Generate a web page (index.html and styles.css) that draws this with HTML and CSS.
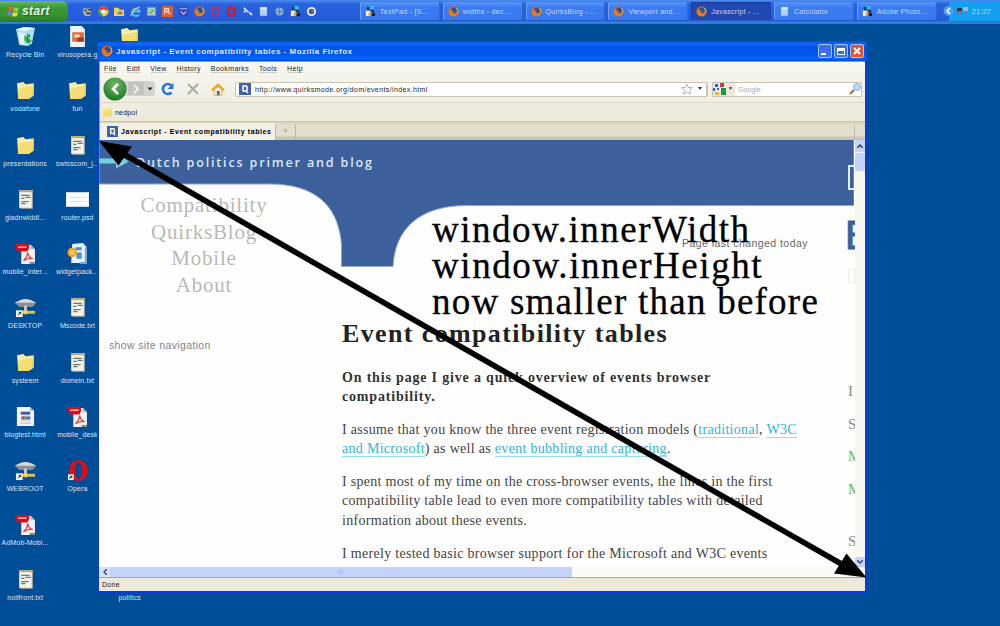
FILE: index.html
```html
<!DOCTYPE html>
<html lang="en">
<head>
<meta charset="utf-8">
<title>Desktop</title>
<link rel="stylesheet" href="styles.css">
</head>
<body>
<svg class="defs" width="0" height="0">
  <defs>
    <linearGradient id="gFolder" x1="0" y1="0" x2="1" y2="1"><stop offset="0" stop-color="#fff6b0"/><stop offset="1" stop-color="#eec54a"/></linearGradient>
    <radialGradient id="gBack" cx=".5" cy=".3" r=".7"><stop offset="0" stop-color="#72b866"/><stop offset="1" stop-color="#1c7a22"/></radialGradient>
  </defs>
  <symbol id="folder" viewBox="0 0 20 20"><path d="M2 3l6-1 2 2 8-1 0 12-5 3-10 0z" fill="url(#gFolder)"/><path d="M4 7l13-2-1 11-3 2-10 0z" fill="#f6dc74"/><path d="M4 7l12-2" stroke="#fffbd5" stroke-width="1"/></symbol>
  <symbol id="bin" viewBox="0 0 20 20"><path d="M1 3l8-2 10 1-3 15-4 2-8-1z" fill="#b4dcf0"/><path d="M1 3l8 2 10-3-10-1z" fill="#eafaff"/><path d="M3 6l2 11 4 1V7z" fill="#e0f4fc"/><path d="M12 7l3 2-2 3 3 2-3 3-3-2M9 9l3 2-3 4z" fill="#2aa43c"/></symbol>
  <symbol id="txt" viewBox="0 0 20 20"><path d="M4 1h13v17H4z" fill="#f4f3ec"/><path d="M4 1h13v2H4z" fill="#b9aa78"/><path d="M6 6h8M6 9h3M10 8h5M6 12h7M6 14h4" stroke="#6d7780" stroke-width="1.2"/><path d="M16.500 2v16.500H5" fill="none" stroke="#8b9299"/></symbol>
  <symbol id="pres" viewBox="0 0 20 20"><path d="M3 0h11l3 3v17H3z" fill="#edf2fb"/><path d="M5 6h11v9H5z" fill="#dd6b32"/><path d="M7 8h5v3H7z" fill="#fbe0c0"/><path d="M10 11h6v4h-6z" fill="#a63820"/></symbol>
  <symbol id="card" viewBox="0 0 24 20"><path d="M1 3h22v14H1z" fill="#fbfcfd"/><path d="M4 8h16M4 12h16" stroke="#dfe3e8"/></symbol>
  <symbol id="pdf" viewBox="0 0 20 20"><path d="M6 2h9l4 4v14H6z" fill="#f4f2f3"/><path d="M15 2v4h4z" fill="#bbb"/><path d="M0 1h12l2 2-2 5H2z" fill="#d5101c"/><path d="M3 4h8" stroke="#f6aaaa" stroke-width="1.500"/><path d="M8 17c3-3 4-5 4-8 1 4 2 5 5 6-3-1-6 0-9 2z" fill="none" stroke="#e04048" stroke-width="1.200"/><path d="M14 18h5v2h-5z" fill="#888"/></symbol>
  <symbol id="zip" viewBox="0 0 20 20"><path d="M5 1l10-1 4 4v15H4z" fill="#e8f2fb"/><path d="M8 4h6v3H8zM9 9h5v6H9z" fill="#4c8fd0"/><circle cx="5" cy="9" r="4.500" fill="#f0a423"/><path d="M3 7h4v4H3z" fill="#f9d163"/><path d="M18 4v15h-6" fill="none" stroke="#73a8d8" stroke-width="2"/></symbol>
  <symbol id="drive" viewBox="0 0 22 22"><path d="M0 6q11-8 22 0l-4 4H5z" fill="#d8d9d7"/><path d="M0 6h22l-3 4H4z" fill="#8b8e90"/><path d="M11 9v7" stroke="#ccc" stroke-width="3"/><path d="M3 16h18" stroke="#d9c264" stroke-width="3"/><path d="M9 14h4v4H9z" fill="#f8da33"/><path d="M1 14h7v7H1z" fill="#f6f6f6"/><path d="M3 19l3-3M4 16h2v2" fill="none" stroke="#222"/></symbol>
  <symbol id="html" viewBox="0 0 20 22"><path d="M1 1h14l4 4v16H1z" fill="#f3f4f7"/><path d="M15 1v4h4" fill="#9fa9b8"/><path d="M5 6h10v3H5z" fill="#4655a6"/><path d="M5 10h10v6H5z" fill="#cfd6ea"/><path d="M6 11h3v3H6z" fill="#d13a2e"/><path d="M9 11h3v3H9z" fill="#35a048"/><path d="M12 11h3v3h-3z" fill="#3f68e0"/><path d="M4 18h12" stroke="#b4bac6"/></symbol>
  <symbol id="opera" viewBox="0 0 22 22"><ellipse cx="12" cy="11" rx="10" ry="11" fill="#d8101c"/><ellipse cx="12" cy="11" rx="3.600" ry="8.500" fill="#004e98"/><path d="M1 15h6v6H1z" fill="#f6f6f6"/><path d="M2 20l3-3M3 17h2v2" fill="none" stroke="#222"/></symbol>
  <symbol id="ring" viewBox="0 0 12 12"><ellipse cx="6" cy="6" rx="3.800" ry="4.600" fill="none" stroke="currentColor" stroke-width="2.600"/></symbol>
  <symbol id="fox" viewBox="0 0 12 12"><circle cx="6" cy="6" r="5.500" fill="#e8660c"/><circle cx="6.800" cy="4.600" r="3.200" fill="#35508e"/><path d="M1 2q0 3 3 3l2 1-1 2 4 0 2-5q1 8-5 8.500Q0 11 1 2z" fill="#f07a12"/><path d="M8 1q4 2 3 7-1-4-3-7z" fill="#fbbb2c"/></symbol>
  <symbol id="chrome" viewBox="0 0 12 12"><circle cx="6" cy="6" r="5.500" fill="#f5c92b"/><path d="M1 4a5.500 5.500 0 0 1 10 0L6 6z" fill="#e03a2c"/><path d="M1 4l3 4 2 3.500A5.500 5.500 0 0 1 1 4z" fill="#37a446"/><circle cx="6" cy="6" r="2.500" fill="#e8f2ff"/></symbol>
  <symbol id="ie" viewBox="0 0 12 12"><path d="M10 9a4 4 0 1 1 .5-3H4" fill="none" stroke="#55c4f4" stroke-width="2"/><path d="M1 11Q2 3 11 1" fill="none" stroke="#f2c641" stroke-width="1.200"/></symbol>
  <symbol id="globe" viewBox="0 0 12 12"><circle cx="6" cy="6" r="4.500" fill="#86aed4"/><path d="M2 6h8M6 2v8" stroke="#4f7eae"/></symbol>
  <symbol id="pad" viewBox="0 0 12 12"><path d="M2 1h8v8H2z" fill="#163a80"/><path d="M5 0h5v4H5z" fill="#30b7e8"/><path d="M1 5h5v6H1z" fill="#f3efe4"/><path d="M4 7h4v4H4z" fill="#e9a23c"/><path d="M7 8h4v3H7z" fill="#182038"/></symbol>
  <symbol id="scissors" viewBox="0 0 12 12"><path d="M2 2l5 5M8 7l3 3M4 5l-2 2" stroke="#d8d8e8" stroke-width="2"/></symbol>
  <symbol id="dog" viewBox="0 0 12 12"><path d="M2 2l3 1 4-1 1 3-1 6H3L1 7z" fill="#a8b0a4"/><path d="M3 4h2v2H3zM7 3h3v2H7zM5 7h4v2H5z" fill="#2d3440"/></symbol>
  <symbol id="book" viewBox="0 0 12 12"><path d="M2 1h8v10H2z" fill="#9fbdf0"/><path d="M3 2h6v2H3zM3 6h6M3 8h6" fill="#dbe7fa" stroke="#dbe7fa"/></symbol>
  <symbol id="magn" viewBox="0 0 12 12"><circle cx="6" cy="6" r="4" fill="#315a94" stroke="#e8eef8" stroke-width="2"/><path d="M5 5h3v3z" fill="#e06040"/></symbol>
  <symbol id="qm" viewBox="0 0 12 12"><path d="M0 0h12v12H0z" fill="#3d64a8"/><path d="M8 3H4v5h3l2 2M8 3v5" fill="none" stroke="#fff" stroke-width="1.500"/></symbol>
</svg>

<div class="desktop">
  <header class="taskbar">
    <div class="start">
      <svg width="13" height="13" viewBox="0 0 13 13"><path d="M2 2q2-1.500 4 0L5 6Q3 5 1 6z" fill="#ee5a2c"/><path d="M7 2q2 1.500 5 0l-1 4Q9 7 6 6z" fill="#8ad044"/><path d="M1 7q2-1 4 0l-1 4Q2 10 0 11z" fill="#5a8cf0"/><path d="M6 7q2 1.500 5 0l-1 4q-2 1-5 0z" fill="#fbd435"/></svg>
      <span>start</span>
    </div>
    <nav class="quick">
      <svg><use href="#dog"/></svg><svg><use href="#chrome"/></svg>
      <svg viewBox="0 0 12 12"><path d="M0 2h5l1 2h5v7H0z" fill="#f1cf58"/><path d="M4 6h5v3H4z" fill="#7c8390"/></svg>
      <svg><use href="#ie"/></svg>
      <svg viewBox="0 0 12 12"><path d="M1 1h10v10H1z" fill="#67a883"/><path d="M3 3h6v6H3zM3 3l6 6" stroke="#d4ecd9" fill="none"/></svg>
      <svg viewBox="0 0 12 12"><path d="M0 0h12v12H0z" fill="#d8603e"/><path d="M3 9V3h4v3H3M6 6l3 3" stroke="#f9d0bc" fill="none" stroke-width="1.500"/></svg>
      <svg viewBox="0 0 12 12"><path d="M1 1h10v10H1z" fill="#3b42b4"/><path d="M2 3h8M3 6l3 3 3-3" stroke="#b9bdf2" fill="none" stroke-width="1.300"/></svg>
      <svg><use href="#fox"/></svg><svg class="dim"><use href="#ring"/></svg><svg class="red"><use href="#ring"/></svg>
      <svg><use href="#scissors"/></svg><svg><use href="#book"/></svg><svg><use href="#globe"/></svg><svg><use href="#pad"/></svg><svg><use href="#magn"/></svg>
    </nav>
    <div class="tasks">
      <div class="task"><svg><use href="#pad"/></svg><span>TextPad - [S...</span></div>
      <div class="task"><svg><use href="#fox"/></svg><span>widths - dec...</span></div>
      <div class="task"><svg><use href="#fox"/></svg><span>QuirksBlog - ...</span></div>
      <div class="task"><svg><use href="#fox"/></svg><span>Viewport and...</span></div>
      <div class="task active"><svg><use href="#fox"/></svg><span>Javascript - ...</span></div>
      <div class="task"><svg><use href="#book"/></svg><span>Calculator</span></div>
      <div class="task"><svg><use href="#pad"/></svg><span>Adobe Photo...</span></div>
    </div>
    <div class="tray">
      <svg class="chev" width="11" height="12" viewBox="0 0 11 12"><circle cx="5.500" cy="6" r="5" fill="#4e9df6"/><path d="M7 3L4 6l3 3" fill="none" stroke="#fff" stroke-width="1.600"/></svg>
      <svg width="13" height="12" viewBox="0 0 13 12"><path d="M1 3h5v4H1z" fill="#303058"/><path d="M2 6h4v3H2z" fill="#b8625c"/><path d="M7 2h5v4H7z" fill="#9cb8d0"/></svg>
      <span>21:27</span>
    </div>
  </header>

  <main class="icons">
    <div class="ic"><svg><use href="#bin"/></svg><span>Recycle Bin</span></div>
    <div class="ic"><svg><use href="#pres"/></svg><span>virusopera.g</span></div>
    <div class="ic"><svg><use href="#folder"/></svg></div>
    <div class="ic"><svg><use href="#folder"/></svg><span>vodafone</span></div>
    <div class="ic"><svg><use href="#folder"/></svg><span>fun</span></div>
    <div></div>
    <div class="ic"><svg><use href="#folder"/></svg><span>presentations</span></div>
    <div class="ic"><svg><use href="#txt"/></svg><span>swisscom_j...</span></div>
    <div></div>
    <div class="ic"><svg><use href="#txt"/></svg><span>gladnwiddl...</span></div>
    <div class="ic wide"><svg><use href="#card"/></svg><span>router.psd</span></div>
    <div></div>
    <div class="ic"><svg><use href="#pdf"/></svg><span>mobile_inter...</span></div>
    <div class="ic"><svg><use href="#zip"/></svg><span>widgetpack...</span></div>
    <div></div>
    <div class="ic"><svg><use href="#drive"/></svg><span>DESKTOP</span></div>
    <div class="ic"><svg><use href="#txt"/></svg><span>Mscode.txt</span></div>
    <div></div>
    <div class="ic"><svg><use href="#folder"/></svg><span>systeem</span></div>
    <div class="ic"><svg><use href="#txt"/></svg><span>domein.txt</span></div>
    <div></div>
    <div class="ic"><svg><use href="#html"/></svg><span>blogtest.html</span></div>
    <div class="ic"><svg><use href="#pdf"/></svg><span>mobile_desk</span></div>
    <div></div>
    <div class="ic"><svg><use href="#drive"/></svg><span>WEBROOT</span></div>
    <div class="ic"><svg><use href="#opera"/></svg><span>Opera</span></div>
    <div></div>
    <div class="ic"><svg><use href="#pdf"/></svg><span>AdMob-Mobi...</span></div>
    <div></div><div></div>
    <div class="ic"><svg><use href="#txt"/></svg><span>nolifront.txt</span></div>
    <div></div>
    <div class="ic"><svg></svg><span>politics</span></div>
  </main>

  <section class="window">
    <div class="titlebar">
      <svg width="12" height="12"><use href="#fox"/></svg>
      <h1>Javascript - Event compatibility tables - Mozilla Firefox</h1>
      <div class="btn"><i class="min"></i></div>
      <div class="btn"><i class="max"></i></div>
      <div class="btn close"><svg width="10" height="10" viewBox="0 0 10 10"><path d="M2 2l6 6M8 2L2 8" stroke="#fff" stroke-width="2"/></svg></div>
    </div>
    <div class="chrome">
      <div class="menu"><span>File</span><span>Edit</span><span>View</span><span>History</span><span>Bookmarks</span><span>Tools</span><span>Help</span></div>
      <div class="toolbar">
        <svg class="nav" width="52" height="24" viewBox="0 0 52 24"><path d="M20 4h28q4 0 4 4v7q0 4-4 4H20z" fill="#d2d2ce"/><path d="M25 5h16v13H25z" fill="#c3c4c2"/><path d="M31 8l4 4-4 4" fill="none" stroke="#eee" stroke-width="2"/><path d="M44.500 10.500h5l-2.500 3z" fill="#222"/><circle cx="12" cy="12" r="11.500" fill="url(#gBack)"/><path d="M15 7l-5 5 5 5" fill="none" stroke="#fff" stroke-width="2.600"/></svg>
        <svg class="reload" width="14" height="14" viewBox="0 0 14 14"><path d="M10.500 10.500a5 5 0 1 1 0-7" fill="none" stroke="#2a74dc" stroke-width="2.600"/><path d="M12.500 1v6h-6z" fill="#2a74dc"/></svg>
        <svg class="stop" width="12" height="12" viewBox="0 0 12 12"><path d="M1 1l10 10M11 1L1 11" stroke="#a9a9a4" stroke-width="2"/></svg>
        <svg class="home" width="14" height="13" viewBox="0 0 14 13"><path d="M3 7h8v5H3z" fill="#dfe6f0"/><path d="M1 7.500L7 2l6 5.500" fill="none" stroke="#eba91e" stroke-width="2.600"/><path d="M3 7v5.500h3M11 7v5.500H8.500" fill="none" stroke="#e9c060"/><path d="M6 8h2.500v4.500H6z" fill="#8a5530"/></svg>
        <div class="url"><svg width="12" height="12"><use href="#qm"/></svg><span>http://www.quirksmode.org/dom/events/index.html</span>
          <svg width="12" height="12" viewBox="0 0 12 12"><path d="M6 1l1.500 3.500 4 .2-3 2.600 1 3.700L6 9l-3.500 2 1-3.700-3-2.600 4-.2z" fill="#fff" stroke="#b4b4b4"/></svg>
          <svg width="6" height="4" viewBox="0 0 6 4"><path d="M1 0h4L3 3z" fill="#333"/></svg></div>
        <div class="search"><div class="engine"><svg width="13" height="12" viewBox="0 0 13 12"><path d="M0 0h13v12H0z" fill="#e8eefc"/><path d="M7 0h4v4H7z" fill="#e8302c"/><path d="M8 5h5v7H8z" fill="#159b3c"/><path d="M2 1h3v3H2zM0 5h2v3H0zM4 5h2v2H4z" fill="#2c5ee0"/><path d="M2 9h4v3H2z" fill="#f7b41e"/></svg><svg width="5" height="4" viewBox="0 0 6 4"><path d="M1 0h4L3 3z" fill="#333"/></svg></div><span>Google</span>
          <svg width="12" height="12" viewBox="0 0 12 12"><path d="M1 11l4-4" stroke="#a46a3c" stroke-width="2.200"/><circle cx="8" cy="4" r="3.400" fill="#b9ddfa" stroke="#79aee6"/></svg></div>
      </div>
      <div class="bookmarks"><svg width="12" height="12"><use href="#folder"/></svg><span>nedpol</span></div>
      <div class="tabs">
        <div class="tab"><svg width="11" height="11"><use href="#qm"/></svg><span>Javascript - Event compatibility tables</span></div>
        <div class="newtab">+</div>
        <div class="alltabs"></div>
      </div>
    </div>
    <div class="view">
      <div class="page">
        <svg class="banner" width="755" height="130" viewBox="0 0 755 130"><path d="M0 0H755V66.500H368C320 66.500 296 90 294 127.500H242.500V105C239 65 215 45 170 45H0z" fill="#3c609c" stroke="#8fa6cf"/><path d="M0 19.500h17v-5l13 8-13 7v-5H0z" fill="#74cfe6"/><path d="M755 27h-5v23h5" fill="none" stroke="#e4ecf8" stroke-width="2"/></svg>
        <p class="tagline">Dutch politics primer and blog</p>
        <div class="cols">
          <div class="side">
            <a>Compatibility</a><a>QuirksBlog</a><a>Mobile</a><a>About</a>
            <p>show site navigation</p>
          </div>
          <article>
            <p class="changed">Page last changed today</p>
            <h2>Event compatibility tables</h2>
            <p class="lead">On this page I give a quick overview of events browser<br>compatibility.</p>
            <p>I assume that you know the three event registration models (<a>traditional</a>, <a>W3C</a><br><a>and Microsoft</a>) as well as <a>event bubbling and capturing</a>.</p>
            <p>I spent most of my time on the cross-browser events, the lines in the first<br>compatibility table lead to even more compatibility tables with detailed<br>information about these events.</p>
            <p>I merely tested basic browser support for the Microsoft and W3C events</p>
          </article>
          <aside><b>E</b><i></i><span>I</span><span>S</span><span class="g">M</span><span class="g u">M</span><span>S</span></aside>
        </div>
      </div>
      <div class="vbar"><div class="up"><svg width="6" height="4" viewBox="0 0 6 4"><path d="M0 4l3-3 3 3" fill="none" stroke="#3a5080" stroke-width="1.500"/></svg></div><div class="vthumb"></div><div class="down"><svg width="6" height="4" viewBox="0 0 6 4"><path d="M0 0l3 3 3-3" fill="none" stroke="#3a5080" stroke-width="1.500"/></svg></div></div>
    </div>
    <div class="hbar"><div class="left"><svg width="4" height="6" viewBox="0 0 4 6"><path d="M4 0L1 3l3 3" fill="none" stroke="#3a5080" stroke-width="1.500"/></svg></div><div class="hthumb"><svg width="6" height="5" viewBox="0 0 6 5"><path d="M1 0v5M4 0v5" stroke="#9cb4ee"/></svg></div></div>
    <div class="status">Done</div>
  </section>

  <div class="note"><span class="n1">window.innerWidth</span><span class="n2">window.innerHeight</span><span class="n3">now smaller than before</span></div>
  <svg class="arrow" width="1000" height="626" viewBox="0 0 1000 626"><path d="M120 152L845 566" stroke="#000" stroke-width="5.600"/><path d="M99 141l33 5.500-13.500 19zM866.500 577.500l-20-24-12.500 20z"/></svg>
</div>
</body>
</html>
```
FILE: styles.css
```css
* { box-sizing: border-box; }
body { margin: 0; font-family: "Liberation Sans", Arial, sans-serif; }
h1, h2, p { margin: 0; }
svg { display: block; flex: none; }
.defs { position: absolute; }
.desktop { position: relative; width: 1000px; height: 626px; overflow: hidden; background: #004e98; }

.taskbar { display: flex; align-items: center; height: 24px; background: linear-gradient(#4a8ef0 0, #2a62dc 4px, #245bdb 17px, #245bd0 21px, #3a84e0 22px, #2a76d2 24px); }
.start { display: flex; align-items: center; gap: 2px; width: 68px; height: 21px; margin-bottom: 2px; padding-left: 7px; border-radius: 0 6px 6px 0; background: linear-gradient(#6cba62, #3a9a38 30%, #349030 75%, #2a7828); color: #e9f6e6; font: italic bold 12px "Liberation Sans", sans-serif; letter-spacing: .4px; text-shadow: 1px 1px 1px #255d22; }
.quick { display: flex; gap: 5px; padding-left: 14px; margin-bottom: 2px; width: 292px; }
.quick svg { width: 11px; height: 11px; }
.dim { color: #a03a78; }
.red { color: #e01020; }
.tasks { display: flex; gap: 3px; width: 580px; height: 18px; margin-bottom: 2px; }
.task { display: flex; align-items: center; gap: 4px; flex: none; width: 79.800px; padding-left: 5px; border-radius: 2px; background: linear-gradient(#5a96f8, #3c7cf2 30%, #3878ee); color: #c6d8fb; font-size: 7px; letter-spacing: .3px; white-space: nowrap; box-shadow: inset 1px 0 #6aa2fa, inset -1px 0 #2e66d8; }
.task svg { width: 11px; height: 11px; }
.active { background: #1d49b0; box-shadow: inset 1px 1px #173c98; }
.tray { display: flex; align-items: center; gap: 2px; width: 60px; height: 20px; margin-bottom: 2px; padding-left: 3px; background: linear-gradient(90deg, transparent 9px, #14a0ee 9px); color: #b8e4fc; font-size: 7px; letter-spacing: .3px; }
.tray span { padding-left: 1px; }

.icons { display: grid; grid-template-columns: repeat(3, 52.300px); grid-auto-rows: 54.250px; margin-left: -1px; padding-top: 2px; }
.ic { display: flex; flex-direction: column; align-items: center; gap: 4px; color: #d8e6f6; font-size: 7px; line-height: 8px; letter-spacing: .12px; white-space: nowrap; }
.ic svg { width: 21px; height: 21px; }
.wide svg { width: 25px; }

.window { position: absolute; left: 97px; top: 41px; width: 770px; height: 552px; display: flex; flex-direction: column; padding: 0 2px 3px; border-radius: 5px 5px 0 0; background: #0a3bd8; overflow: hidden; }
.titlebar { display: flex; align-items: center; gap: 3px; height: 20px; flex: none; margin: 0 -2px; padding: 0 3px 0 4px; background: linear-gradient(#0a4ad0, #1068fa 3px, #0054e4 6px, #0058ee 14px, #0068fe 18px, #0040c8); }
.titlebar h1 { flex: 1; color: #dbe8ff; font-size: 8px; font-weight: bold; letter-spacing: .5px; white-space: nowrap; }
.btn { width: 14px; height: 14px; margin-left: -1px; border: 1px solid #a9c4fa; border-radius: 2px; background: #3b6df0; }
.btn i { display: block; }
.min { width: 5px; height: 2px; margin: 8px 0 0 2px; background: #fff; }
.max { width: 8px; height: 7px; margin: 3px 0 0 2px; border: 1px solid #fff; border-top-width: 3px; }
.close { background: #e2532c; padding: 1px; }
.chrome { flex: none; height: 79px; border: solid #7e9ce0; border-width: 1px 0 0 1px; background: linear-gradient(#f8f7f2, #ece9d8 60px); color: #26241f; font-size: 7px; }
.menu { display: flex; gap: 10px; height: 14px; padding: 3px 0 0 4px; line-height: 8px; letter-spacing: .35px; }
.menu span { text-decoration: underline; text-decoration-thickness: .5px; text-decoration-color: #ccc; }
.toolbar { display: flex; align-items: center; height: 27px; padding-left: 3px; border-bottom: 1px solid #dedac8; }
.reload { margin-left: 6px; }
.stop { margin-left: 12px; }
.home { margin-left: 12px; }
.url { display: flex; align-items: center; gap: 4px; width: 473px; height: 15px; margin-left: 10px; padding: 0 3px; border: 1px solid #c9c5b2; border-right-width: 2px; border-radius: 2px; background: #fff; letter-spacing: .39px; }
.url span, .search span { flex: 1; }
.search { display: flex; align-items: center; width: 150px; height: 15px; margin-left: 4px; border: 1px solid #c9c5b2; background: #fff; color: #aaa; }
.engine { display: flex; align-items: center; gap: 2px; height: 13px; width: 22px; margin-right: 3px; background: #ece9d8; }
.bookmarks { display: flex; align-items: center; gap: 2px; height: 18px; padding-left: 1px; letter-spacing: .2px; }
.tabs { display: flex; height: 19px; background: linear-gradient(#c6c2ae, #dfdcc9 3px, #e4e1d0 14px, #c9c5b3 17px); }
.tab { display: flex; align-items: center; gap: 3px; width: 175px; margin-top: 2px; padding-left: 7px; background: #f3f1e6; color: #000; font-weight: bold; letter-spacing: .6px; white-space: nowrap; }
.newtab { width: 21px; margin-top: 3px; border: solid #bbb8a8; border-width: 0 1px; color: #999; text-align: center; font-size: 9px; line-height: 14px; }
.alltabs { margin: 5px 2px 0 auto; width: 9px; height: 12px; border-left: 1px solid #bbb; }

.view { display: flex; height: 427px; flex: none; }
.page { position: relative; flex: none; width: 756px; height: 427px; padding-left: 1px; overflow: hidden; background: #fefefe; }
.banner { position: absolute; left: 0; top: -1px; }
.tagline { position: relative; height: 45px; padding: 13px 0 0 36px; color: #dde7f5; font: 600 12.500px/20px "Open Sans", sans-serif; letter-spacing: 1.850px; }
.cols { position: relative; display: flex; }
.side { flex: none; width: 242px; padding-top: 7px; color: #b9b9b4; font-family: "Liberation Serif", serif; font-size: 21px; letter-spacing: .8px; }
.side a { display: block; height: 26.700px; width: 208px; line-height: 27px; text-align: center; }
.side p { padding: 38px 0 0 9px; color: #858585; font: 10.500px/16px "Liberation Sans", sans-serif; letter-spacing: .36px; }
article { flex: none; width: 505px; padding-top: 49px; font: 14px/19.300px "Liberation Serif", serif; color: #444; letter-spacing: .3px; white-space: nowrap; }
article p { margin-bottom: 13.500px; }
article .changed { margin: 0 0 10px 340px; color: #666; font: 10.500px/18px "Liberation Sans", sans-serif; letter-spacing: .45px; }
h2 { margin: 66px 0 18px; font-size: 26px; line-height: 32px; color: #222; letter-spacing: 1.370px; }
.lead { font-weight: bold; color: #333; letter-spacing: .82px; }
article a { color: #2fb4dc; border-bottom: 1px solid #98dcee; }
aside { display: flex; flex-direction: column; width: 8px; padding: 30px 0 0 1px; font: 15px/20px "Liberation Serif", serif; color: #888; }
aside b { margin-left: -3px; color: #3c609c; font: 40px/40px "Liberation Sans", sans-serif; height: 40px; -webkit-text-stroke: 1px #3c609c; }
aside i { flex: none; height: 14px; margin: 14px 0 98px; border: 1px solid #eee; }
aside span { height: 32.500px; }
.g { color: #63c446; }
.u { height: 52px; }
.vbar { display: flex; flex-direction: column; width: 10px; background: #f7f6f1; }
.up, .down { display: grid; place-items: center; height: 12px; background: #c3d3fb; }
.vthumb { height: 18px; background: #c3d3fb; margin-top: 1px; border-radius: 2px; }
.down { height: 10px; margin-top: auto; }
.hbar { display: flex; flex: none; height: 10px; background: #fafaf7; }
.left { display: grid; place-items: center; width: 11px; background: #d6e1fc; }
.hthumb { display: grid; place-items: center; width: 462px; background: #c3d3fb; }
.status { flex: 1; border-top: 1px solid #aaa99a; background: #ece9d8; padding-left: 3px; color: #222; font-size: 7px; line-height: 13px; letter-spacing: .3px; }

.note { position: absolute; left: 432px; top: 212px; display: flex; flex-direction: column; color: #000; font: 37px/36px "Liberation Serif", serif; white-space: nowrap; -webkit-text-stroke: .3px #000; }
.n1 { letter-spacing: 1.500px; }
.n2 { letter-spacing: 1.580px; }
.n3 { letter-spacing: 1.240px; }
.arrow { position: absolute; left: 0; top: 0; }
```
